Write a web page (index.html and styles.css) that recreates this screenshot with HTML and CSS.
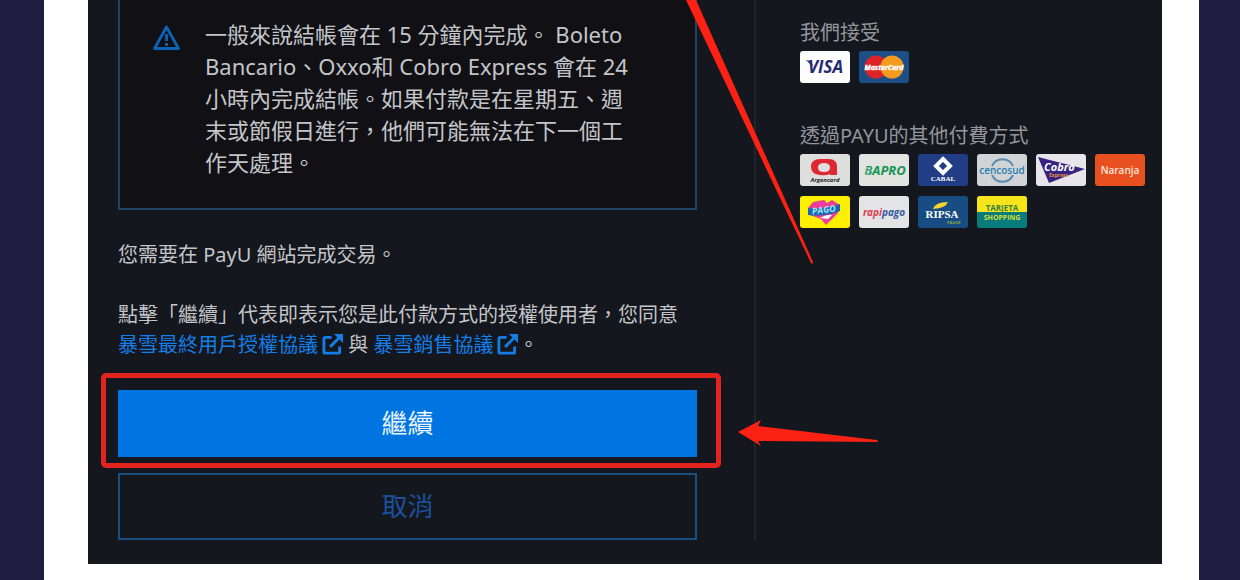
FILE: index.html
```html
<!DOCTYPE html>
<html lang="zh-Hant">
<head>
<meta charset="utf-8">
<meta name="viewport" content="width=device-width, initial-scale=1">
<title>PayU 結帳</title>
<link rel="stylesheet" href="styles.css">
</head>
<body>
<div class="page">
  <main class="card">
    <section class="checkout">
      <div class="notice">
        <svg class="notice-icon" viewBox="0 0 29 27" aria-hidden="true">
          <path d="M14.5 3 26.5 24.5H2.5Z" fill="none" stroke="#0d63b8" stroke-width="2.8" stroke-linejoin="round"/>
          <path d="M14.5 10v7M14.5 19v3" stroke="#0d63b8" stroke-width="2.8"/>
        </svg>
        <p class="notice-text">一般來說結帳會在 15 分鐘內完成。 Boleto Bancario、Oxxo和 Cobro Express 會在 24 小時內完成結帳。如果付款是在星期五、週末或節假日進行，他們可能無法在下一個工作天處理。</p>
      </div>
      <p class="copy">您需要在 PayU 網站完成交易。</p>
      <p class="copy">點擊「繼續」代表即表示您是此付款方式的授權使用者，您同意<br><a href="#eula">暴雪最終用戶授權協議<svg class="external" viewBox="0 0 22 22" aria-hidden="true"><path d="M10 3.5H3.5A1.5 1.5 0 0 0 2 5v13.5A1.5 1.5 0 0 0 3.5 20H17a1.5 1.5 0 0 0 1.5-1.5V13M8.5 13.5 18 4" fill="none" stroke="currentColor" stroke-width="3"/><path d="M12.5 0H22v9.5Z" fill="currentColor"/></svg></a> 與 <a href="#sale">暴雪銷售協議<svg class="external" viewBox="0 0 22 22" aria-hidden="true"><path d="M10 3.5H3.5A1.5 1.5 0 0 0 2 5v13.5A1.5 1.5 0 0 0 3.5 20H17a1.5 1.5 0 0 0 1.5-1.5V13M8.5 13.5 18 4" fill="none" stroke="currentColor" stroke-width="3"/><path d="M12.5 0H22v9.5Z" fill="currentColor"/></svg></a>。</p>
      <div class="actions">
        <div class="marked">
          <button class="button primary" type="button">繼續</button>
          <span class="marker"></span>
          <svg class="arrow" viewBox="0 0 142 28" aria-hidden="true"><path d="M1 13 24 1 21 7 140 21Q142 22 140 23L21 22 24 27Z" fill="#fb2114"/></svg>
        </div>
        <button class="button secondary" type="button">取消</button>
      </div>
      <svg class="stroke" viewBox="0 0 130 266" aria-hidden="true"><path d="M2 0H12L129 262Q129 265 127 263Z" fill="#fb2114"/></svg>
    </section>
    <aside class="methods">
      <section>
        <h2 class="heading">我們接受</h2>
        <div class="logos">
          <svg class="logo" viewBox="0 0 50 32" role="img" aria-label="Visa"><rect width="50" height="32" rx="3" fill="#fdfdfd"/><path d="M6 9l5 1 2 5-2-1z" fill="#2b2f7c"/><text x="8" y="22" font-size="17" font-weight="700" font-style="italic" fill="#272a72">VISA</text></svg>
          <svg class="logo" viewBox="0 0 50 32" role="img" aria-label="MasterCard"><rect width="50" height="32" rx="3" fill="#1d4f86"/><circle cx="17" cy="16" r="11.5" fill="#db2427"/><circle cx="33" cy="16" r="11.5" fill="#f59b20"/><text x="25" y="19" text-anchor="middle" font-size="7" font-weight="700" font-style="italic" fill="#fff" stroke="#fff" stroke-width=".4">MasterCard</text></svg>
        </div>
      </section>
      <section>
        <h2 class="heading">透過PAYU的其他付費方式</h2>
        <div class="logos">
          <svg class="logo" viewBox="0 0 50 32" role="img" aria-label="Argencard"><rect width="50" height="32" rx="3" fill="#dedede"/><path fill-rule="evenodd" d="M15 5H29Q37 5 37 13V21H30V20Q26 22 20 21Q11 20 11 13Q11 5 20 5ZM24 9Q18 9 18 13.500Q18 18 24 18Q30 18 30 13.500Q30 9 24 9Z" fill="#df2932"/><text x="25" y="28" text-anchor="middle" font-size="6" font-weight="700" font-style="italic" fill="#222">Argencard</text></svg>
          <svg class="logo" viewBox="0 0 50 32" role="img" aria-label="Bapro"><rect width="50" height="32" rx="3" fill="#e3e3e1"/><text x="26" y="21" text-anchor="middle" font-size="13" font-weight="700" font-style="italic" fill="#159553">BAPRO</text><path d="M2 14h10M2 17h9M2 20h8" stroke="#e3e3e1" stroke-width=".8"/></svg>
          <svg class="logo" viewBox="0 0 50 32" role="img" aria-label="Cabal"><rect width="50" height="32" rx="3" fill="#213d85"/><path d="M25 5 32 12 25 19 18 12Z" fill="none" stroke="#fff" stroke-width="4"/><text class="serif" x="25" y="27" text-anchor="middle" font-size="7" font-weight="700" fill="#fff">CABAL</text></svg>
          <svg class="logo" viewBox="0 0 50 32" role="img" aria-label="Cencosud"><rect width="50" height="32" rx="3" fill="#d1d4d7"/><path d="M15 12A11.5 11.5 0 0 1 36 12M15 21A11.5 11.5 0 0 0 36 21" fill="none" stroke="#5b8cae" stroke-width="2"/><text x="25" y="20" text-anchor="middle" font-size="10" font-weight="600" fill="#287eb2">cencosud</text></svg>
          <svg class="logo" viewBox="0 0 50 32" role="img" aria-label="Cobro Express"><rect width="50" height="32" rx="3" fill="#e7e5e9"/><path d="M2 3 49 15 13 29Z" fill="#37237f"/><text x="8" y="17" font-size="11" font-weight="700" font-style="italic" fill="#fff">Cobro</text><text x="13" y="23" font-size="5" font-weight="700" fill="#e8943b">Express</text></svg>
          <svg class="logo" viewBox="0 0 50 32" role="img" aria-label="Naranja"><rect width="50" height="32" rx="3" fill="#e9501f"/><text x="25" y="20" text-anchor="middle" font-size="10" font-weight="600" fill="#ffe5d9">Naranja</text></svg>
          <svg class="logo" viewBox="0 0 50 32" role="img" aria-label="Pago Fácil"><rect width="50" height="32" rx="3" fill="#fff000"/><path d="M13 6 24 4 27 7 32 4 40 9 38 17 26 29 21 23 10 19 8 12Z" fill="#e93e9e"/><path d="M8 12Q23 14 40 8V15Q24 21 8 19Z" fill="#1767b4"/><text x="24" y="17" text-anchor="middle" font-size="9" font-weight="700" font-style="italic" fill="#9de4f2" transform="rotate(-7 24 15)">PAGO</text><path d="M20 22Q28 18 32 19L28 23Z" fill="#fff"/></svg>
          <svg class="logo" viewBox="0 0 50 32" role="img" aria-label="Rapipago"><rect width="50" height="32" rx="3" fill="#e4e4e6"/><text x="25" y="20" text-anchor="middle" font-size="10" font-weight="700" font-style="italic" fill="#d9414c">rapi<tspan fill="#355b9e">pago</tspan></text></svg>
          <svg class="logo" viewBox="0 0 50 32" role="img" aria-label="Ripsa"><rect width="50" height="32" rx="3" fill="#174d83"/><path d="M15 13Q17 6 30 6Q28 12 15 13Z" fill="#f4d52e"/><text class="serif" x="24" y="22" text-anchor="middle" font-size="11" font-weight="700" fill="#fff">RIPSA</text><text x="29" y="28" font-size="4" font-weight="700" fill="#91a443">PAGOS</text></svg>
          <svg class="logo" viewBox="0 0 50 32" role="img" aria-label="Tarjeta Shopping"><rect width="50" height="32" rx="3" fill="#087b7b"/><path d="M0 16V3Q0 0 3 0H47Q50 0 50 3V16Z" fill="#f7e51b"/><text x="25" y="15" text-anchor="middle" font-size="8" font-weight="700" fill="#37813f">TARJETA</text><text x="25" y="24" text-anchor="middle" font-size="7" font-weight="700" fill="#d0df38">SHOPPING</text></svg>
        </div>
      </section>
    </aside>
  </main>
</div>
</body>
</html>
```
FILE: styles.css
```css
* {
  box-sizing: border-box;
}

body {
  margin: 0;
  background: #1f1d40;
  color: #c4c5c8;
  font-family: "Noto Sans", "Noto Sans CJK TC", sans-serif;
  font-size: 20px;
  line-height: 30px;
}

p,
h2 {
  margin: 0;
}

.page {
  min-height: 100vh;
  margin: 0 41px 0 44px;
  padding: 0 37px 16px 44px;
  background: #fff;
}

.card {
  display: flex;
  padding-bottom: 24px;
  background: #14171e;
}

.checkout {
  position: relative;
  display: flex;
  flex: 1;
  flex-direction: column;
  gap: 30px;
  min-width: 0;
  padding: 0 57px 0 30px;
}

.notice {
  display: flex;
  align-items: flex-start;
  gap: 24px;
  padding: 18px 64px 30px 32px;
  border: 2px solid #1b4562;
  border-top: 0;
  background: #101015;
}

.notice-icon {
  flex: none;
  width: 29px;
  margin-top: 6px;
}

.notice-text {
  font-size: 22px;
  line-height: 32px;
}

a {
  color: #147ee6;
  text-decoration: none;
}

.external {
  width: 21px;
  height: 21px;
  margin-left: 4px;
  vertical-align: -3px;
}

.actions {
  display: flex;
  flex-direction: column;
  gap: 16px;
}

.marked {
  position: relative;
}

.button {
  display: block;
  width: 100%;
  padding: 14px;
  border: 2px solid #1b4f80;
  font-family: inherit;
  font-size: 26px;
  line-height: 35px;
}

.primary {
  border-color: #0074e0;
  background: #0074e0;
  color: #eaf4ff;
}

.secondary {
  background: transparent;
  color: #1c509c;
}

.marker {
  position: absolute;
  inset: -17px -24px -11px -17px;
  border: 5px solid #e2231e;
  border-radius: 5px;
  pointer-events: none;
}

.arrow {
  position: absolute;
  top: 29px;
  left: calc(100% + 40px);
  width: 142px;
  pointer-events: none;
}

.stroke {
  position: absolute;
  top: 0;
  right: -60px;
  width: 130px;
  pointer-events: none;
}

.methods {
  display: flex;
  flex-direction: column;
  gap: 38px;
  width: 408px;
  padding: 18px 0 0 44px;
  border-left: 2px solid #20242b;
}

.heading {
  margin-bottom: 3px;
  color: #93959a;
  font-size: 20px;
  font-weight: 400;
}

.logos {
  display: flex;
  flex-wrap: wrap;
  gap: 10px 9px;
}

.logo {
  width: 50px;
  height: 32px;
  font-family: "Open Sans", "Noto Sans", sans-serif;
}

.serif {
  font-family: "Liberation Serif", serif;
}
```
